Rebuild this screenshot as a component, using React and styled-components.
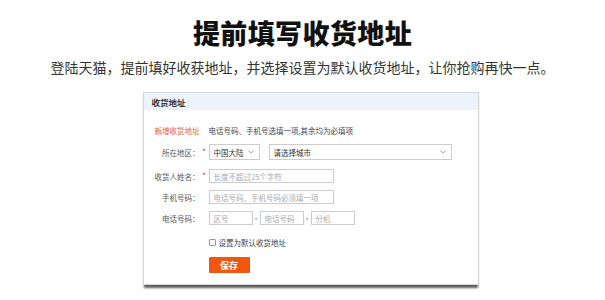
import React from "react";
import styled, { createGlobalStyle } from "styled-components";

const Global = createGlobalStyle`
  html, body { margin: 0; padding: 0; background: #fff; }
  body { font-family: "Noto Sans CJK SC", "Noto Sans", sans-serif; color: #333; }
`;

const Page = styled.div`
  width: 605px;
  height: 300px;
  overflow: hidden;
  display: flex;
  flex-direction: column;
  align-items: center;
  padding-top: 19px;
  box-sizing: border-box;
`;

const Title = styled.h1`
  margin: 0;
  font-size: 27px;
  line-height: 28px;
  font-weight: 900;
  color: #111;
  letter-spacing: 0.4px;
`;

const Subtitle = styled.p`
  margin: 10px 0 0;
  font-size: 14px;
  line-height: 20px;
  color: #333;
`;

const Card = styled.div`
  margin-top: 15px;
  margin-left: 16px;
  width: 334px;
  border: 1px solid #d6d6d6;
  background: #fff;
  box-shadow: 0 4px 2px -1px rgba(40, 40, 40, 0.75);
  display: flex;
  flex-direction: column;
`;

const CardHeader = styled.div`
  height: 17px;
  background: #edf3fb;
  display: flex;
  align-items: center;
  padding-left: 8px;
  font-size: 8.5px;
  font-weight: 700;
  color: #333;
`;

const Body = styled.div`
  padding: 14px 0 11px 0;
  display: flex;
  flex-direction: column;
`;

const Row = styled.div`
  display: flex;
  align-items: center;
  height: ${(p) => p.$h || 14}px;
  margin-top: ${(p) => p.$mt || 0}px;
`;

const Label = styled.div`
  width: 56px;
  text-align: right;
  font-size: 7.5px;
  color: ${(p) => (p.$red ? "#f0603a" : "#555")};
  white-space: nowrap;
`;

const Star = styled.span`
  width: 9px;
  font-size: 8px;
  line-height: 8px;
  height: 8px;
  color: #e33;
  text-align: center;
  margin-bottom: 1px;
`;

const Note = styled.span`
  font-size: 7.5px;
  color: #444;
  margin-left: ${(p) => p.$ml || 0}px;
`;

const Box = styled.div`
  box-sizing: border-box;
  width: ${(p) => p.$w}px;
  height: 100%;
  border: 1px solid #ccc;
  display: flex;
  align-items: center;
  justify-content: space-between;
  padding: 0 5px 0 4px;
  font-size: 7.5px;
  color: ${(p) => (p.$ph ? "#aaa" : "#333")};
  background: #fff;
  white-space: nowrap;
`;

const Fields = styled.div`
  display: flex;
  align-items: center;
  gap: ${(p) => p.$gap || 0}px;
  height: 100%;
`;

const Dot = styled.span`
  width: 7px;
  text-align: center;
  font-size: 7px;
  color: #777;
`;

const Check = styled.span`
  width: 7px;
  height: 7px;
  border: 1px solid #999;
  border-radius: 1px;
  box-sizing: border-box;
  margin-right: 3px;
`;

const Button = styled.button`
  width: 41px;
  height: 16px;
  border: none;
  border-radius: 1px;
  background: #f2550d;
  color: #fff;
  font-family: inherit;
  font-size: 9px;
  font-weight: 700;
  padding: 0;
  cursor: pointer;
`;

const Indent = styled.div`
  width: 65px;
  flex: none;
`;

const Chevron = () => (
  <svg width="6" height="4" viewBox="0 0 6 4">
    <path d="M0.5 0.6 L3 3.2 L5.5 0.6" fill="none" stroke="#888" strokeWidth="0.8" />
  </svg>
);

export default function App() {
  return (
    <Page>
      <Global />
      <Title>提前填写收货地址</Title>
      <Subtitle>登陆天猫，提前填好收获地址，并选择设置为默认收货地址，让你抢购再快一点。</Subtitle>
      <Card>
        <CardHeader>收货地址</CardHeader>
        <Body>
          <Row $h={12}>
            <Label $red>新增收货地址</Label>
            <Note $ml={9}>电话号码、手机号选填一项,其余均为必填项</Note>
          </Row>
          <Row $h={16} $mt={8}>
            <Label>所在地区：</Label>
            <Star>*</Star>
            <Fields $gap={9}>
              <Box $w={51}>中国大陆<Chevron /></Box>
              <Box $w={183}>请选择城市<Chevron /></Box>
            </Fields>
          </Row>
          <Row $mt={9}>
            <Label>收货人姓名：</Label>
            <Star>*</Star>
            <Box $w={125} $ph>长度不超过25个字符</Box>
          </Row>
          <Row $mt={7}>
            <Label>手机号码：</Label>
            <Star />
            <Box $w={125} $ph>电话号码、手机号码必须填一项</Box>
          </Row>
          <Row $mt={7}>
            <Label>电话号码：</Label>
            <Star />
            <Fields>
              <Box $w={44} $ph>区号</Box>
              <Dot>•</Dot>
              <Box $w={44} $ph>电话号码</Box>
              <Dot>•</Dot>
              <Box $w={44} $ph>分机</Box>
            </Fields>
          </Row>
          <Row $h={10} $mt={12}>
            <Indent />
            <Check />
            <Note>设置为默认收货地址</Note>
          </Row>
          <Row $h={16} $mt={10}>
            <Indent />
            <Button>保存</Button>
          </Row>
        </Body>
      </Card>
    </Page>
  );
}
